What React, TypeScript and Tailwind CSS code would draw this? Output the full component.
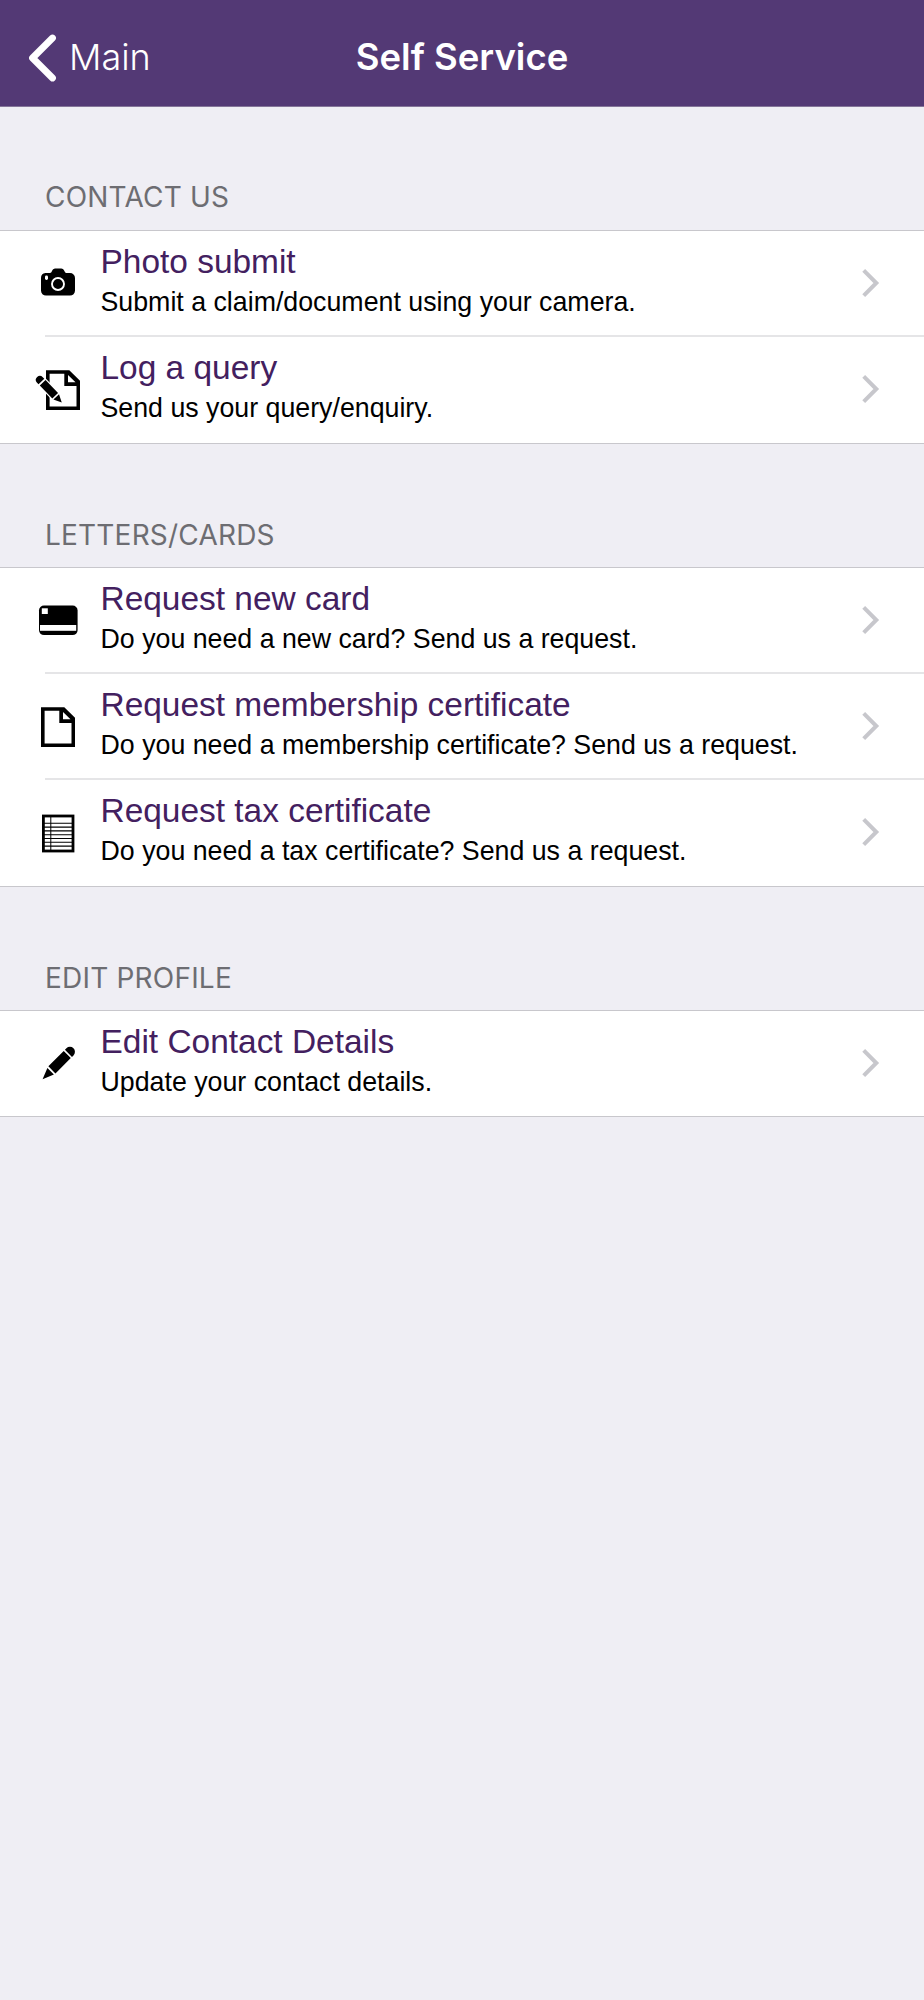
import React from 'react';

interface Item {
  title: string;
  subtitle: string;
  icon: React.ReactNode;
}

interface Section {
  heading: string;
  items: Item[];
}

const CameraIcon = () => (
  <svg width="60" height="60" viewBox="0 0 60 60">
    <path d="M15.500 20H20c1 0 1.500-.8 2-2 .6-1.600 1.600-2.500 3.200-2.500h6c1.600 0 2.600.9 3.200 2.500.5 1.200 1 2 2 2h3.600a5 5 0 0 1 5 5v12.600a5 5 0 0 1-5 5H16a5 5 0 0 1-5-5V25a5 5 0 0 1 4.500-5z" />
    <circle cx="28" cy="31" r="6" fill="none" stroke="#fff" strokeWidth="1.900" />
    <rect x="15" y="22.600" width="3" height="4.400" rx="1.400" fill="#fff" />
  </svg>
);

const NoteIcon = () => (
  <svg width="60" height="60" viewBox="0 0 60 60">
    <path d="M16 11.200h23.300L50 21.800V51H16z M19.600 14.800v32.600h26.900V27H34.300V14.800z M38 16v7.300h7.500z" fillRule="evenodd" />
    <g transform="translate(8.500 19.500) rotate(46)">
      <path d="M4-5.200h24L37 0l-8.500 5.200H4z" fill="#fff" />
      <path d="M4.200-4v8H2a4 4 0 0 1 0-8z M6-4H24v8H6z M25.500-3.900 33.500 0l-8 3.900z" />
    </g>
  </svg>
);

const CardIcon = () => (
  <svg width="60" height="60" viewBox="0 0 60 60">
    <rect x="9" y="15.500" width="38.600" height="29.600" rx="5" />
    <rect x="11.800" y="18.300" width="6" height="5.700" fill="#fff" />
    <rect x="10" y="35" width="36.200" height="5.800" fill="#fff" />
  </svg>
);

const DocumentIcon = () => (
  <svg width="60" height="60" viewBox="0 0 60 60">
    <path d="M11 11.200h23.300L45 21.800V51H11z M14.600 14.800v32.600h26.900V27H29.300V14.800z M33 16v7.300h7.500z" fillRule="evenodd" />
  </svg>
);

const SheetIcon = () => (
  <svg width="60" height="60" viewBox="0 0 60 60" fill="none" stroke="#000">
    <rect x="13.400" y="14" width="29.600" height="35" strokeWidth="2.800" />
    <path d="M14 21.300h28M14 25.100h28M14 28.900h28M14 32.700h28M14 36.500h28M14 40.300h28M14 44.100h28" strokeWidth="1.100" />
    <path d="M20.800 14v34" strokeWidth="1" />
  </svg>
);

const PencilIcon = () => (
  <svg width="60" height="60" viewBox="0 0 60 60">
    <g transform="translate(41 17.800) rotate(135)">
      <path d="M3.600-5V5H1.500a5 5 0 0 1 0-10z M5.300-5h21.700V5H5.300z M28.800-4.600 40.200 0 28.800 4.600z" />
    </g>
  </svg>
);

const Chevron = () => (
  <svg width="18" height="30" viewBox="0 0 18 30" fill="none" stroke="#c7c7cc" strokeWidth="4">
    <path d="M1.700 2.300 14.300 15 1.700 27.700" />
  </svg>
);

const sections: Section[] = [
  {
    heading: 'CONTACT US',
    items: [
      { title: 'Photo submit', subtitle: 'Submit a claim/document using your camera.', icon: <CameraIcon /> },
      { title: 'Log a query', subtitle: 'Send us your query/enquiry.', icon: <NoteIcon /> },
    ],
  },
  {
    heading: 'LETTERS/CARDS',
    items: [
      { title: 'Request new card', subtitle: 'Do you need a new card? Send us a request.', icon: <CardIcon /> },
      { title: 'Request membership certificate', subtitle: 'Do you need a membership certificate? Send us a request.', icon: <DocumentIcon /> },
      { title: 'Request tax certificate', subtitle: 'Do you need a tax certificate? Send us a request.', icon: <SheetIcon /> },
    ],
  },
  {
    heading: 'EDIT PROFILE',
    items: [
      { title: 'Edit Contact Details', subtitle: 'Update your contact details.', icon: <PencilIcon /> },
    ],
  },
];

const Row: React.FC<{ item: Item; last: boolean }> = ({ item, last }) => (
  <li className="flex h-[106px] flex-col justify-between only:h-[105px]">
    <div className="flex h-[103px] items-center pl-[30px] pr-[44px]">
      <span className="w-[70.500px] shrink-0">{item.icon}</span>
      <div className="flex-1 pb-px font-['Liberation_Sans',sans-serif] whitespace-nowrap">
        <p className="text-[33.450px] leading-[40px] text-[#43205f]">{item.title}</p>
        <p className="text-[26.750px] leading-[40px] text-black">{item.subtitle}</p>
      </div>
      <Chevron />
    </div>
    {!last && <div className="ml-[45px] h-[2px] bg-[#e5e5e7]" />}
  </li>
);

export default function App() {
  return (
    <div className="min-h-[2000px] w-[924px] bg-[#efeef4] font-[Inter,sans-serif]">
      <header className="grid h-[107px] grid-cols-3 items-center border-b border-[#847599] bg-[#533975] pt-[9px] text-white">
        <button className="flex items-center pl-[28px] text-[36px]">
          <svg width="29" height="48" viewBox="0 0 29 48" fill="none" stroke="#fff" strokeWidth="6.800" strokeLinecap="round" strokeLinejoin="round">
            <path d="M24.500 4 4.500 24l20 20" />
          </svg>
          <span className="ml-[12px] pb-px font-[350]">Main</span>
        </button>
        <h1 className="text-center text-[36.500px] font-semibold">Self Service</h1>
      </header>
      <main>
        {sections.map(section => (
          <section key={section.heading} className="group">
            <h2 className="flex h-[123px] items-end pb-[12px] pl-[45px] text-[28px] leading-[40px] tracking-[0.200px] text-[#6d6d72] group-first:pb-[13px]">
              {section.heading}
            </h2>
            <ul className="border-y border-[#c8c7cc] bg-white">
              {section.items.map((item, i) => (
                <Row key={item.title} item={item} last={i === section.items.length - 1} />
              ))}
            </ul>
          </section>
        ))}
      </main>
    </div>
  );
}
